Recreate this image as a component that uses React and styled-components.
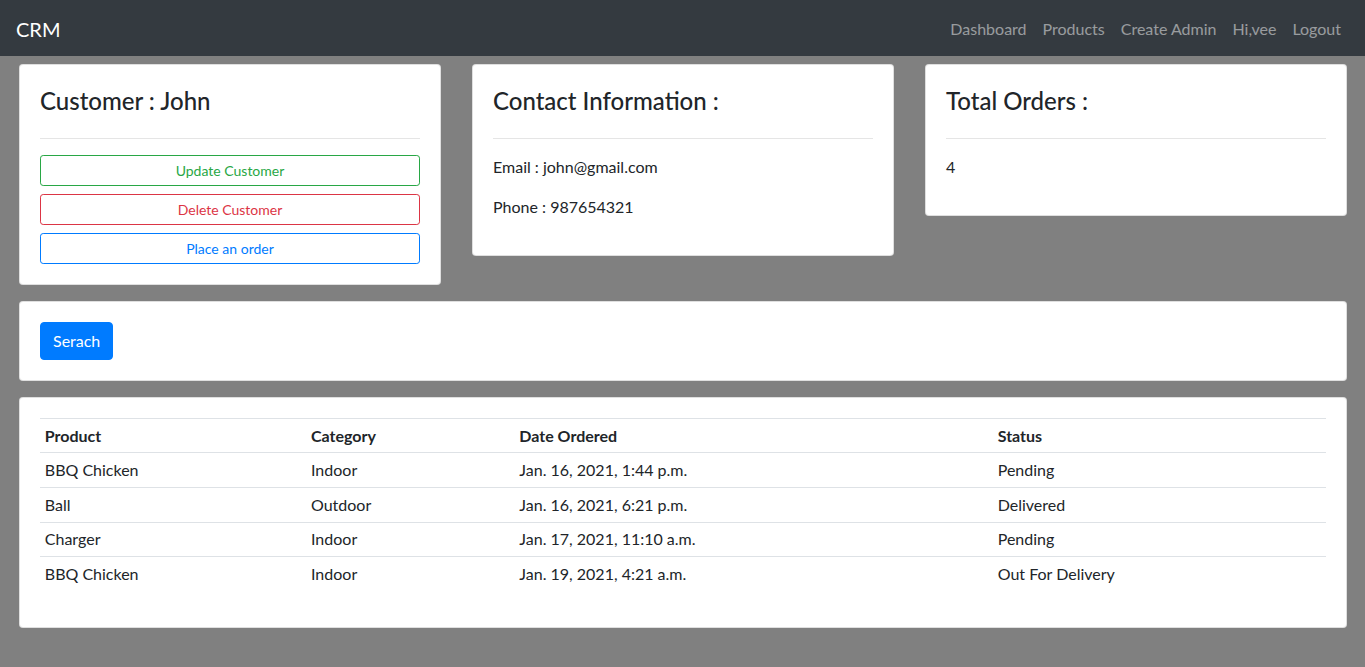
import React from "react";
import styled, { createGlobalStyle } from "styled-components";

const Global = createGlobalStyle`
  html, body { margin: 0; padding: 0; }
  body {
    background: #808080;
    font-family: Lato, "Noto Sans", sans-serif;
    font-size: 16px;
    line-height: 1.5;
    color: #212529;
  }
  * { box-sizing: border-box; }
`;

const Navbar = styled.nav`
  height: 56px;
  background: #343a40;
  display: flex;
  align-items: center;
  justify-content: space-between;
  padding: 9px 16px 7px 16px;
`;

const Brand = styled.a`
  color: #fff;
  font-size: 20px;
  line-height: 30px;
  text-decoration: none;
`;

const NavLinks = styled.div`
  display: flex;
  align-items: center;
`;

const NavLink = styled.a`
  color: rgba(255, 255, 255, 0.5);
  padding: 8px;
  text-decoration: none;
  font-size: 16px;
`;

const Main = styled.main`
  padding: 8px 18px 0 19px;
  display: flex;
  flex-direction: column;
  gap: 16px;
`;

const TopRow = styled.div`
  display: grid;
  grid-template-columns: repeat(3, 1fr);
  gap: 31px;
  align-items: start;
`;

const Card = styled.div`
  background: #fff;
  border: 1px solid rgba(0, 0, 0, 0.125);
  border-radius: 4px;
  padding: 20px;
`;

const Title = styled.h4`
  margin: 0;
  padding-top: 2px;
  font-size: 24px;
  font-weight: 500;
  line-height: 1.2;
`;

const Rule = styled.hr`
  margin: 22px 0 16px;
  border: 0;
  border-top: 1px solid rgba(0, 0, 0, 0.1);
`;

const colors = { success: "#28a745", danger: "#dc3545", primary: "#007bff" };

const OutlineButton = styled.button`
  display: block;
  width: 100%;
  background: #fff;
  color: ${(p) => colors[p.$variant]};
  border: 1px solid ${(p) => colors[p.$variant]};
  border-radius: 3.2px;
  font-family: inherit;
  font-size: 14px;
  line-height: 1.5;
  padding: 4px 8px;
  & + & { margin-top: 8px; }
`;

const Text = styled.p`
  margin: 0 0 16px;
`;

const PrimaryButton = styled.button`
  background: #007bff;
  color: #fff;
  border: 1px solid #007bff;
  border-radius: 4px;
  font-family: inherit;
  font-size: 16px;
  line-height: 1.5;
  padding: 6px 12px;
`;

const Table = styled.table`
  width: 100%;
  border-collapse: collapse;
  margin-bottom: 16px;
`;

const Th = styled.th`
  text-align: left;
  font-weight: 700;
  padding: 4.8px;
  border-top: 1px solid #dee2e6;
  width: ${(p) => p.$w};
`;

const Td = styled.td`
  padding: 4.8px;
  border-top: 1px solid #dee2e6;
`;

const orders = [
  ["BBQ Chicken", "Indoor", "Jan. 16, 2021, 1:44 p.m.", "Pending"],
  ["Ball", "Outdoor", "Jan. 16, 2021, 6:21 p.m.", "Delivered"],
  ["Charger", "Indoor", "Jan. 17, 2021, 11:10 a.m.", "Pending"],
  ["BBQ Chicken", "Indoor", "Jan. 19, 2021, 4:21 a.m.", "Out For Delivery"],
];

export default function App() {
  return (
    <>
      <Global />
      <Navbar>
        <Brand href="#">CRM</Brand>
        <NavLinks>
          <NavLink href="#">Dashboard</NavLink>
          <NavLink href="#">Products</NavLink>
          <NavLink href="#">Create Admin</NavLink>
          <NavLink href="#">Hi,vee</NavLink>
          <NavLink href="#">Logout</NavLink>
        </NavLinks>
      </Navbar>
      <Main>
        <TopRow>
          <Card>
            <Title>Customer : John</Title>
            <Rule />
            <OutlineButton $variant="success">Update Customer</OutlineButton>
            <OutlineButton $variant="danger">Delete Customer</OutlineButton>
            <OutlineButton $variant="primary">Place an order</OutlineButton>
          </Card>
          <Card>
            <Title>Contact Information :</Title>
            <Rule />
            <Text>Email : john@gmail.com</Text>
            <Text>Phone : 987654321</Text>
          </Card>
          <Card>
            <Title>Total Orders :</Title>
            <Rule />
            <Text>4</Text>
          </Card>
        </TopRow>
        <Card>
          <PrimaryButton>Serach</PrimaryButton>
        </Card>
        <Card>
          <Table>
            <tbody>
              <tr>
                <Th $w="20.7%">Product</Th>
                <Th $w="16.2%">Category</Th>
                <Th $w="37.2%">Date Ordered</Th>
                <Th $w="25.9%">Status</Th>
              </tr>
              {orders.map((o, i) => (
                <tr key={i}>
                  {o.map((c, j) => (
                    <Td key={j}>{c}</Td>
                  ))}
                </tr>
              ))}
            </tbody>
          </Table>
        </Card>
      </Main>
    </>
  );
}
